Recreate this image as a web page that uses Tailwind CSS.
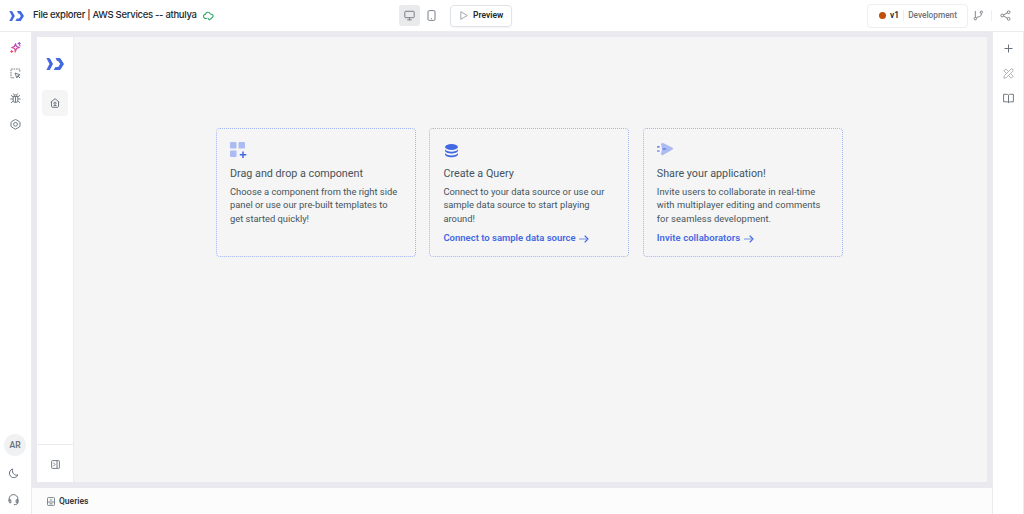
<!DOCTYPE html>
<html lang="en">
<head>
  <meta charset="UTF-8">
  <title>File explorer | AWS Services -- athulya</title>
  <script src="https://cdn.jsdelivr.net/npm/@tailwindcss/browser@4"></script>
</head>
<body class="w-[1024px] h-[514px] overflow-hidden bg-white font-['Roboto',sans-serif] text-[#22282e] flex flex-col">
  <!-- shared symbols -->
  <svg class="hidden">
    <symbol id="logo" viewBox="0 0 18 12">
      <path fill="#4368e3" d="M.4 0h2.600q.6 0 1 .6L7 6l-3 5.400q-.4.6-1 .6H.4L3.500 6zM9.600 0h3.700q.8 0 1.200.6L18 6l-3.500 5.400q-.4.6-1.200.6H7.600l1.900-3h2.700L14.200 6l-2-3H11z"/>
    </symbol>
    <symbol id="arrow" viewBox="0 0 10 8">
      <path d="M0 4h8.500" fill="none" stroke="currentColor" stroke-width=".7"/>
      <path d="M6 1l3 3-3 3" fill="none" stroke="currentColor" stroke-width="1.100" stroke-linecap="round" stroke-linejoin="round"/>
    </symbol>
  </svg>

  <header class="h-8 shrink-0 border-b border-[#ececee] flex items-center">
    <div class="w-[399px] flex items-center pl-[9px]">
      <svg class="w-[15px] h-[10px]"><use href="#logo"/></svg>
      <h1 class="ml-[9px] w-[166px] whitespace-nowrap font-['Inter'] text-[9.500px] font-medium tracking-[-0.300px]">File explorer | AWS Services -- athulya</h1>
      <svg class="ml-[4px] mt-px w-[11px] h-[10px]" viewBox="0 0 11 10" fill="none" stroke="#30a46c" stroke-width="1.100" stroke-linecap="round" stroke-linejoin="round">
        <path d="M3.500 7.500H3A2.200 2.200 0 0 1 2.500 3.100C3 .7 6.600.5 7.300 3c1.800-.1 3 1.100 2.700 2.600M5 7.300l1.500 1.500L9.800 6"/>
      </svg>
    </div>
    <div class="w-[113px] flex items-center">
      <button class="w-[21px] h-[21px] rounded-[3px] bg-[#e9eaec] flex items-center justify-center">
        <svg class="w-[11px] h-[11px]" viewBox="0 0 11 11" fill="none" stroke="#6a727c" stroke-width=".9"><rect x=".8" y="1.300" width="9.400" height="6.400" rx=".8"/><path d="M5.500 7.700v2M3.300 9.900h4.400"/></svg>
      </button>
      <button class="w-[23px] h-[21px] flex items-center justify-center">
        <svg class="w-[9px] h-[11px]" viewBox="0 0 9 11" fill="none" stroke="#6a727c" stroke-width=".9"><rect x="1" y=".6" width="7" height="9.800" rx="1.200"/><path d="M4 8.700h1"/></svg>
      </button>
      <button class="ml-[7px] w-[62px] h-[22px] rounded-[4px] border border-[#dfe2e6] shadow-xs flex items-center pl-[9px] gap-[5px] text-[8.500px] font-semibold whitespace-nowrap">
        <svg class="w-[8px] h-[9px]" viewBox="0 0 8 9" fill="none" stroke="#8b929a" stroke-width=".8" stroke-linejoin="round"><path d="M.8.700l6.500 3.800-6.500 3.800z"/></svg>
        Preview
      </button>
    </div>
    <div class="flex-1 flex items-center justify-end">
      <div class="w-[101px] h-[24px] rounded-[4px] border border-[#eceef0] flex items-center pl-[11px] text-[8.500px] font-semibold">
        <i class="w-[7px] h-[7px] rounded-full bg-[#bf4f08]"></i>
        <span class="ml-[4px]">v1</span>
        <span class="ml-[4px] h-[11px] border-l border-[#eceef0] pl-[4px] leading-[11px] font-medium text-[#6a727c] text-[8.300px] whitespace-nowrap">Development</span>
      </div>
      <svg class="ml-[5px] w-[11px] h-[11px]" viewBox="0 0 11 11" fill="none" stroke="#6a727c" stroke-width=".85"><circle cx="2.300" cy="8.700" r="1.200"/><circle cx="8.300" cy="2.200" r="1.200"/><path d="M2.300 1v6.500M8.300 3.400c0 3-1 3-3.300 3.600-1.500.4-1.500.8-1.700 1"/></svg>
      <i class="ml-[7px] h-[11px] w-px bg-[#eceef0]"></i>
      <svg class="ml-[8px] mr-[13px] w-[11px] h-[11px]" viewBox="0 0 11 11" fill="none" stroke="#6a727c" stroke-width=".85"><circle cx="2.200" cy="5.500" r="1.400"/><circle cx="8.600" cy="2.200" r="1.400"/><circle cx="8.600" cy="8.800" r="1.400"/><path d="M3.500 4.900l3.800-2M3.500 6.100l3.800 2"/></svg>
    </div>
  </header>

  <div class="flex-1 min-h-0 flex">
    <aside class="w-8 shrink-0 border-r border-[#ececee] flex flex-col items-center justify-between pr-px pt-[10px] pb-[8px] text-[#6a727c]">
      <div class="flex flex-col gap-[14.500px]">
        <svg class="w-[11px] h-[11px]" viewBox="0 0 11 11" fill="none" stroke="url(#spark)" stroke-width="1.100" stroke-linejoin="round">
          <defs><linearGradient id="spark" gradientUnits="userSpaceOnUse" x1="9" y1="0" x2="2" y2="11"><stop stop-color="#8a4be0"/><stop offset=".5" stop-color="#d03fa8"/><stop offset="1" stop-color="#ff5263"/></linearGradient></defs>
          <path d="M5.500 1.800l1 2.700 2.800 1-2.800 1-1 2.700-1-2.700-2.800-1 2.800-1z"/>
          <path d="M9.200 0v3M7.700 1.500h3M1.700 8v3M.2 9.500h3M4.500 9.900h1.200M9 3.800h1.500"/>
        </svg>
        <svg class="w-[11px] h-[11px]" viewBox="0 0 11 11" fill="none" stroke="currentColor" stroke-width=".9"><path stroke-dasharray="1.600 .8" d="M4 9.800H1V1h8.800v3"/><path d="M5 5l5 1.800-2.200.9-.9 2.300zM8 8l2 2" stroke-linejoin="round"/></svg>
        <svg class="w-[11px] h-[11px]" viewBox="0 0 11 11" fill="none" stroke="currentColor" stroke-width=".9"><path d="M3.200 3.500h4.600v3.700a2.300 2.300 0 0 1-4.600 0zM3.800 3.500a1.700 1.700 0 0 1 3.400 0M5.500 4v5.300M.3 6h2.900M7.800 6h2.900M1 2.200l2.300 1.900M10 2.200L7.700 4.100M1 9.800l2.400-1.900M10 9.800L7.600 7.900M3.300.4l1 1.500M7.700.4l-1 1.500"/></svg>
        <svg class="w-[11px] h-[11px]" viewBox="0 0 11 11" fill="none" stroke="currentColor" stroke-width=".95" stroke-linejoin="round"><path d="M5.500.4l1.600.9 2.300 1.300.6 1v3.400l-.6 1-2.300 1.300-1.600.9-1.600-.9-2.300-1.300-.6-1V3.600l.6-1 2.300-1.300z"/><circle cx="5.500" cy="5.300" r="1.900"/></svg>
      </div>
      <div class="flex flex-col items-center">
        <span class="w-[22px] h-[22px] rounded-full bg-[#f0f1f3] flex items-center justify-center text-[8.500px] font-semibold">AR</span>
        <svg class="mt-[12px] -ml-[3px] w-[11px] h-[11px]" viewBox="0 0 11 11" fill="none" stroke="currentColor" stroke-width="1" stroke-linejoin="round"><path d="M4.700 1A4.400 4.400 0 1 0 9.900 6.800C7 8 3.500 5.500 4.700 1z"/></svg>
        <svg class="mt-[15px] -ml-[3px] w-[11px] h-[12px]" viewBox="0 0 11 12" fill="none" stroke="currentColor" stroke-width="1"><path d="M1.100 7V5a4.400 4.400 0 0 1 8.800 0v3.500c0 1.500-1.500 2.200-4 2.200M1.100 5.800h1.700v3H1.600L1.100 8zM9.900 5.800H8.200v3h1.200l.5-.8z"/></svg>
      </div>
    </aside>

    <main class="w-[960px] flex flex-col bg-[#e9e9ef]">
      <section class="mt-[5px] mx-[5px] h-[445px] flex bg-[#f5f5f5]">
        <nav class="w-[37px] bg-white border-r border-[#e9ebed] flex flex-col items-center">
          <svg class="mt-[21px] w-[18px] h-[12px]"><use href="#logo"/></svg>
          <a class="mt-[20px] w-[26px] h-[26px] rounded-[4px] bg-[#f5f5f5] flex items-center justify-center">
            <svg class="w-[10px] h-[10px]" viewBox="0 0 10 10" fill="none" stroke="#6a727c" stroke-width=".95" stroke-linejoin="round"><path d="M.7 4.200L5 .7l4.300 3.500M1.500 4v4.200l.7 1.100h5.600l.7-1.100V4"/><circle cx="5" cy="5.200" r="1.100"/><path d="M3.500 7.500h3"/></svg>
          </a>
          <div class="mt-auto w-full h-[38px] border-t border-[#e9ebed] flex items-center justify-center pt-px">
            <svg class="w-[9px] h-[9px]" viewBox="0 0 9 9" fill="none" stroke="#6a727c" stroke-width=".9"><rect x=".6" y=".6" width="7.800" height="7.800" rx=".8"/><path d="M6 .6v7.800M2.300 2.700l1.700 1.800-1.700 1.800"/></svg>
          </div>
        </nav>

        <div class="flex-1 pl-[142px] pt-[91px] flex gap-[13.400px] items-start text-[#44545c]">
          <article class="w-[200px] h-[129px] rounded-[4px] border border-dotted border-[#a3b4f5] px-[13px] pt-[13px]">
            <svg class="w-[17px] h-[17px]" viewBox="0 0 17 17"><g fill="#acbcf2"><rect width="6.500" height="6.500" rx="1"/><rect x="8.500" width="6.500" height="6.500" rx="1"/><rect y="8.500" width="6.500" height="6.500" rx="1"/></g><path d="M13 9.500v6.500M9.800 12.800h6.500" stroke="#4368e3" stroke-width="1.500"/></svg>
            <h2 class="mt-[6px] h-[18px] leading-[18px] text-[10.750px] whitespace-nowrap">Drag and drop a component</h2>
            <p class="mt-[2px] text-[9.350px] leading-[13.400px] whitespace-nowrap">Choose a component from the right side<br>panel or use our pre-built templates to<br>get started quickly!</p>
          </article>

          <article class="w-[200px] h-[129px] rounded-[4px] border border-dotted border-[#a3b4f5] px-[13px] pt-[13px]">
            <svg class="w-[17px] h-[17px]" viewBox="0 0 17 17" fill="#4368e3"><ellipse cx="8.500" cy="5" rx="6.500" ry="2.900"/><path d="M2 7.200c1 3.300 12 3.300 13 0v1.300c0 4-13 4-13 0zM2 11c1 3.300 12 3.300 13 0v1.300c0 4-13 4-13 0z"/></svg>
            <h2 class="mt-[6px] h-[18px] leading-[18px] text-[10.750px] whitespace-nowrap">Create a Query</h2>
            <p class="mt-[2px] text-[9.350px] leading-[13.400px] whitespace-nowrap">Connect to your data source or use our<br>sample data source to start playing<br>around!</p>
            <a class="mt-[6px] flex items-center gap-[3px] text-[9.500px] leading-[14px] font-semibold text-[#4368e3] whitespace-nowrap">Connect to sample data source <svg class="mt-px w-[10px] h-[8px]"><use href="#arrow"/></svg></a>
          </article>

          <article class="w-[200px] h-[129px] rounded-[4px] border border-dotted border-[#a3b4f5] px-[13px] pt-[13px]">
            <svg class="w-[17px] h-[17px]" viewBox="0 0 17 17"><path d="M6 1.100l8.800 4.200q2.600 1.400 0 2.800L6 12.900Q4 13.700 4 11.700q1.700-4.700 0-9.200Q4 .3 6 1.100z" fill="#acbcf2"/><path d="M0 4.900h2.700M0 9h2.700M5.500 7h3.700" stroke="#4368e3" stroke-width="1.200"/></svg>
            <h2 class="mt-[6px] h-[18px] leading-[18px] text-[10.750px] whitespace-nowrap">Share your application!</h2>
            <p class="mt-[2px] text-[9.350px] leading-[13.400px] tracking-[0.070px] whitespace-nowrap">Invite users to collaborate in real-time<br>with multiplayer editing and comments<br>for seamless development.</p>
            <a class="mt-[6px] flex items-center gap-[4px] text-[9.500px] leading-[14px] font-semibold tracking-[0.060px] text-[#4368e3] whitespace-nowrap">Invite collaborators <svg class="mt-px w-[10px] h-[8px]"><use href="#arrow"/></svg></a>
          </article>
        </div>
      </section>

      <footer class="mt-auto h-[26px] bg-[#fcfcfc] flex items-center pl-[15px] gap-[4px] text-[8.500px] font-semibold text-[#30373d]">
        <svg class="w-[8px] h-[9px]" viewBox="0 0 8 9" fill="none" stroke="#6a727c" stroke-width=".85"><rect x=".5" y=".6" width="7" height="7.800" rx=".8"/><path d="M.5 5h7M2.800 3h2.400M2.500 6.800h3"/></svg>
        Queries
      </footer>
    </main>

    <aside class="w-8 shrink-0 border-x border-[#ececee] flex flex-col items-center pt-[10.500px] gap-[14.200px] text-[#6a727c]">
      <svg class="w-[11px] h-[11px]" viewBox="0 0 11 11" fill="none" stroke="currentColor"><path d="M5.500 1.500v8M1.500 5.500h8"/></svg>
      <svg class="w-[11px] h-[11px]" viewBox="0 0 11 11" fill="none" stroke="#a6adb4" stroke-width=".9" stroke-linejoin="round"><path d="M.8 10.200l.5-2.500 6.500-6.500q1.200-.8 2 0t0 2L3.300 9.700zM3.300 5.300L.9 2.900l2-2L5.300 3.300M8 6l2.200 2.200-2 2L6 8"/></svg>
      <svg class="w-[11px] h-[11px]" viewBox="0 0 11 11" fill="none" stroke="currentColor" stroke-width=".95" stroke-linejoin="round"><path d="M5.500 2.200Q4.800 1.300 3.500 1.300H.6v7.500h3.200q1.200 0 1.700.9.500-.9 1.700-.9h3.200V1.300H7.500q-1.300 0-2 .9zM5.500 2.200v7.500"/></svg>
    </aside>
  </div>
</body>
</html>
